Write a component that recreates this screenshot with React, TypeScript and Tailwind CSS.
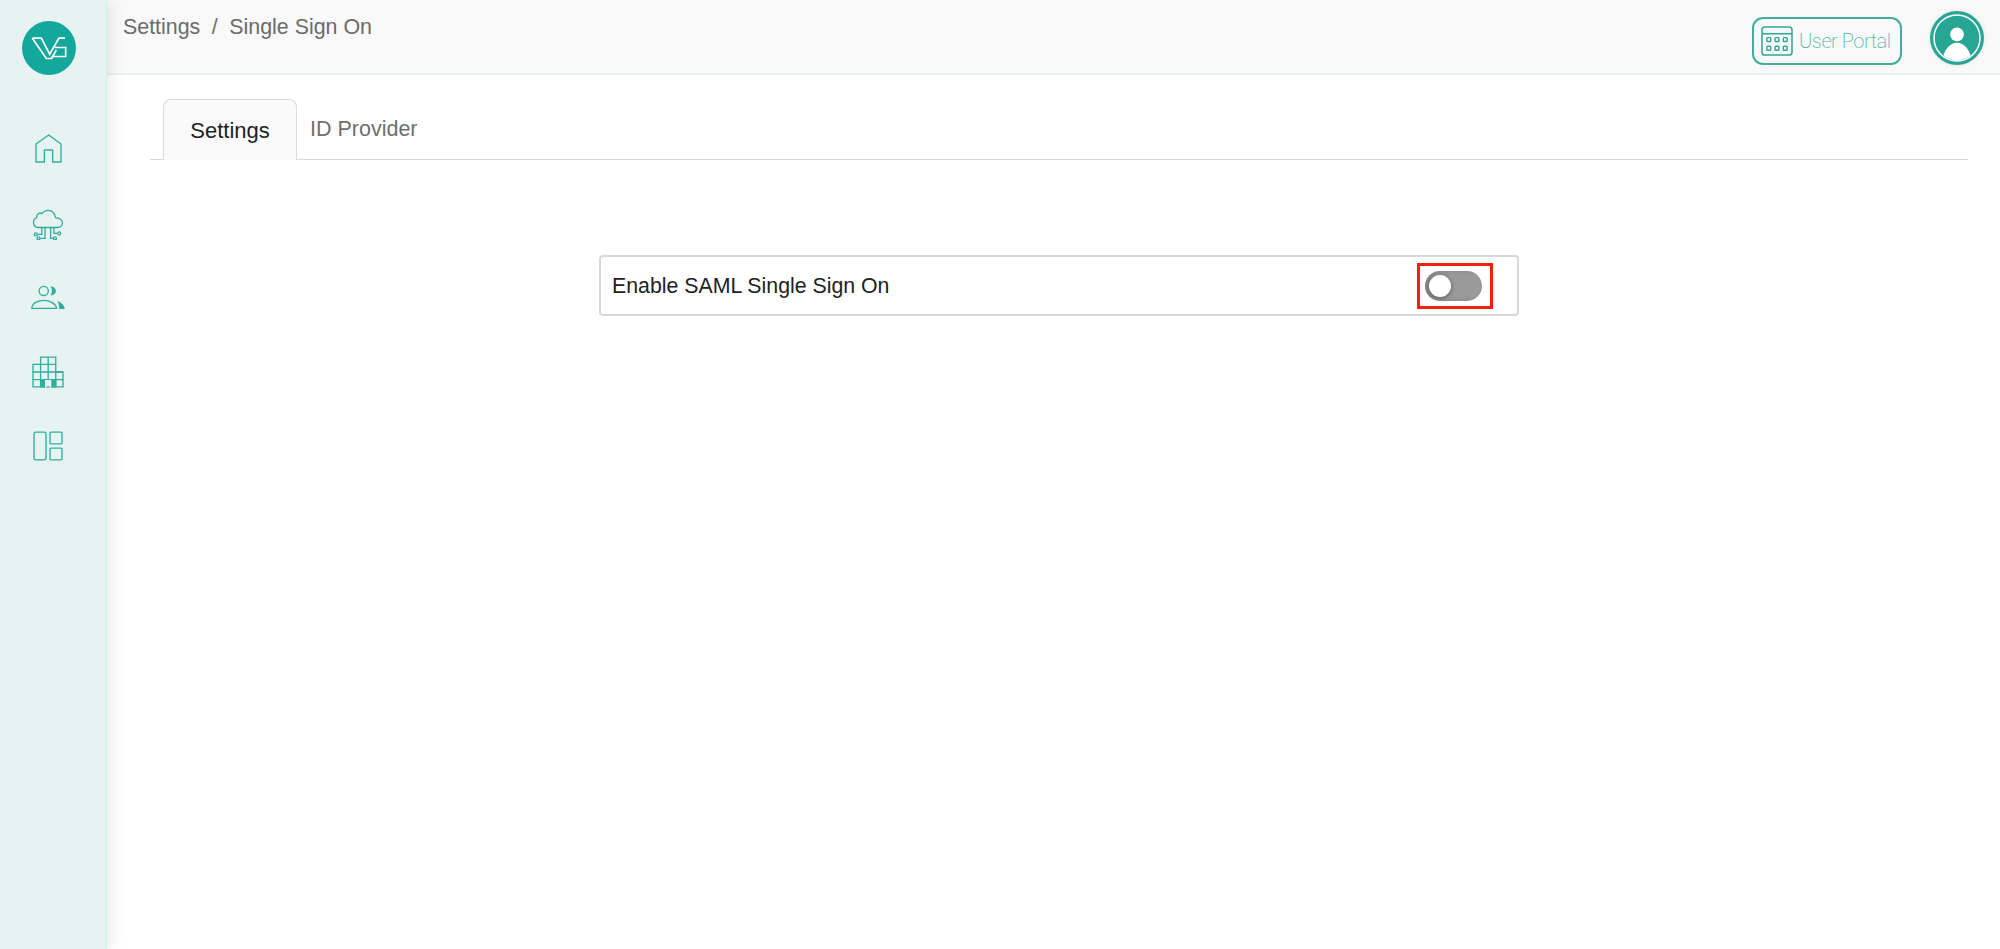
export default function App() {
  const font = "font-['Liberation_Sans',Arial,sans-serif]";
  return (
    <div className={`flex h-[949px] w-[2000px] overflow-hidden bg-white ${font}`}>
      <aside className="relative z-10 flex w-[107px] shrink-0 flex-col items-center border-r border-[#d9ecea] bg-[#e6f3f1] pr-[8px] pt-[21px] shadow-[4px_0_14px_rgba(0,0,0,0.09)]">
        <div className="flex h-[54px] w-[54px] items-center justify-center rounded-full bg-[#13a89b]">
          <svg width="36" height="23" viewBox="66 84 108 68" fill="none" stroke="#fff" strokeWidth="5">
            <path d="M70 87H97L122 135L150 87H168" />
            <path d="M70 87L112 148H128L142 122" />
            <path d="M138 115H170V142H128" />
          </svg>
        </div>
        <nav className="mr-[2px] mt-[36px] flex flex-col items-center text-[#2fae9f]">
          <div className="flex h-[74.5px] items-center justify-center">
            <svg width="27" height="29" viewBox="104 70 81 87" fill="none" stroke="currentColor" strokeWidth="4">
              <path d="M107 100L145 73L182 100V154H157V118H132V154H107Z" strokeLinejoin="round" />
            </svg>
          </div>
          <div className="flex h-[74.5px] items-center justify-center pt-[4px]">
            <svg width="32" height="31" viewBox="96 296 96 94" fill="none" stroke="currentColor" strokeWidth="4">
              <path d="M125 352H115C105 352 100 345 100 337C100 328 106 322 110 322C108 312 118 305 125 310C130 303 138 300 145 300C155 300 165 308 167 322C178 322 188 330 188 338C188 347 180 352 172 352H125" />
              <path d="M125 352V373H112M135 352V385H120M152 352V385H160M162 352V370H173" />
              <circle cx="107" cy="373" r="4.5" />
              <circle cx="115" cy="385" r="4.5" />
              <circle cx="165" cy="385" r="4.5" />
              <circle cx="178" cy="370" r="4.5" />
            </svg>
          </div>
          <div className="flex h-[74.5px] items-center justify-center">
            <svg width="36" height="25" viewBox="90 75 108 76" fill="none" stroke="currentColor" strokeWidth="4">
              <circle cx="131" cy="93" r="14" />
              <path d="M152 79C162 80 168 86 168 93C168 100 162 106 152 107C157 99 157 87 152 79Z" fill="currentColor" stroke="none" />
              <path d="M95 146C95 130 115 122 131 122C150 122 168 132 170 146Z" />
              <path d="M172 124C185 128 193 137 195 148H178C178 138 176 130 172 124Z" fill="currentColor" stroke="none" />
            </svg>
          </div>
          <div className="flex h-[74.5px] items-center justify-center">
            <svg width="32" height="32" viewBox="96 287 97 96" fill="none" stroke="currentColor" strokeWidth="4">
              <path d="M122 312V290H168V335H190V380H99V312H122Z" />
              <path d="M145 290V358M122 312H168M122 312V358M168 335V380M99 335H190M99 358H190" />
              <path d="M122 358H135V380H122ZM155 358H168V380H155Z" fill="currentColor" />
              <path d="M138 382V362H152V382" stroke="#e6f3f1" strokeWidth="5" />
            </svg>
          </div>
          <div className="flex h-[74.5px] items-center justify-center">
            <svg width="30" height="30" viewBox="99 517 90 89" fill="none" stroke="currentColor" strokeWidth="4">
              <rect x="102" y="520" width="36" height="83" rx="6" />
              <rect x="150" y="520" width="36" height="35" rx="3" />
              <rect x="150" y="568" width="36" height="35" rx="3" />
            </svg>
          </div>
        </nav>
      </aside>

      <main className="flex min-w-0 flex-1 flex-col">
        <header className="flex h-[75px] shrink-0 items-start justify-between border-b-2 border-[#e9f2f0] bg-[#f9f9f9] px-[16px]">
          <div className="mt-[13.5px] flex text-[21.4px] leading-[27px] text-[#6b6b6b]">
            <span>Settings</span>
            <span className="mx-[11.5px]">/</span>
            <span>Single Sign On</span>
          </div>
          <div className="flex items-start">
            <button className="mt-[17px] flex h-[48px] w-[150px] items-center gap-[6px] whitespace-nowrap rounded-[11px] border-2 border-[#40ae9f] pl-[7px] font-['Roboto',sans-serif] text-[20px] font-extralight tracking-[-0.45px] text-[#4fb5a8]">
              <svg width="32" height="30" viewBox="0 0 33 31" fill="none" stroke="#31a899" strokeWidth="1.6">
                <rect x="1" y="1" width="31" height="29" rx="3" />
                <path d="M1 8H32" />
                <g strokeWidth="1.5">
                  <rect x="6" y="12" width="4" height="4" rx="0.8" />
                  <rect x="14.5" y="12" width="4" height="4" rx="0.8" />
                  <rect x="23" y="12" width="4" height="4" rx="0.8" />
                  <rect x="6" y="21" width="4" height="4" rx="0.8" />
                  <rect x="14.5" y="21" width="4" height="4" rx="0.8" />
                  <rect x="23" y="21" width="4" height="4" rx="0.8" />
                </g>
              </svg>
              User Portal
            </button>
            <div className="ml-[28px] mt-[11px] shrink-0 rounded-full shadow-[0_0_4px_rgba(0,0,0,0.1)]">
              <svg width="54" height="54" viewBox="0 0 54 54">
                <circle cx="27" cy="27" r="27" fill="#27a696" />
                <circle cx="27" cy="27" r="23" fill="#27a696" stroke="#fff" strokeWidth="1.5" />
                <clipPath id="avatar-clip"><circle cx="27" cy="27" r="22.2" /></clipPath>
                <g clipPath="url(#avatar-clip)" fill="#fff">
                  <circle cx="27" cy="23.4" r="6.8" />
                  <path d="M12 50C14 38 20 31.7 27 31.7C34 31.7 40 38 42 50Z" />
                </g>
              </svg>
            </div>
          </div>
        </header>

        <section className="pl-[43px] pr-[32px]">
          <div className="flex h-[85px] items-end border-b border-[#d8d8d8] pl-[13px]">
            <div className="relative top-px flex h-[61px] w-[134px] items-center justify-center rounded-t-[8px] border border-b-0 border-[#dcdcdc] bg-[#fafafa] pt-[1px] text-[22px] text-[#1f1f1f]">
              Settings
            </div>
            <div className="flex h-[61px] items-center pl-[13px] pt-[1px] text-[21.5px] text-[#6f6f6f]">ID Provider</div>
          </div>

          <div className="mx-auto mt-[95px] flex h-[61px] w-[920px] items-center justify-between rounded-[4px] border-2 border-[#d8d8d8] bg-white pl-[11px] pr-[24px]">
            <span className="pt-[2px] text-[21.3px] text-[#222]">Enable SAML Single Sign On</span>
            <div className="flex h-[46px] w-[76px] items-center border-[3px] border-[#f2200f] pl-[5px]">
              <div className="flex h-[30px] w-[57px] items-center rounded-full bg-[#9a9a9a] shadow-[inset_3px_0_4px_rgba(0,0,0,0.15)]">
                <div className="ml-[4px] h-[22px] w-[22px] rounded-full bg-white shadow-[0_1px_5px_rgba(0,0,0,0.4)]" />
              </div>
            </div>
          </div>
        </section>
      </main>
    </div>
  );
}
